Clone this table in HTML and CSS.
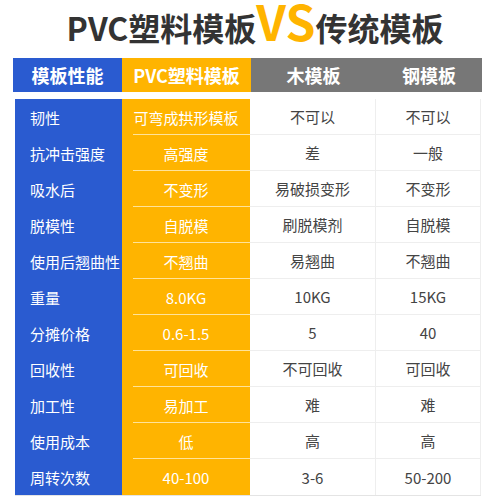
FILE: index.html
```html
<!DOCTYPE html>
<html lang="zh">
<head>
    <meta charset="UTF-8">
    <title>PVC塑料模板VS传统模板</title>
    <link rel="stylesheet" href="styles.css">
</head>
<body>

<h1 class="title">PVC塑料模板<span class="vs">VS</span>传统模板</h1>

<div class="head">
    <div class="h-blue">模板性能</div>
    <div class="h-yellow">PVC塑料模板</div>
    <div class="h-gray">木模板</div>
    <div class="h-gray">钢模板</div>
</div>

<div class="table">
    <div class="row"><div class="label">韧性</div><div class="pvc">可弯成拱形模板</div><div class="val">不可以</div><div class="val">不可以</div></div>
    <div class="row"><div class="label">抗冲击强度</div><div class="pvc">高强度</div><div class="val">差</div><div class="val">一般</div></div>
    <div class="row"><div class="label">吸水后</div><div class="pvc">不变形</div><div class="val">易破损变形</div><div class="val">不变形</div></div>
    <div class="row"><div class="label">脱模性</div><div class="pvc">自脱模</div><div class="val">刷脱模剂</div><div class="val">自脱模</div></div>
    <div class="row"><div class="label">使用后翘曲性</div><div class="pvc">不翘曲</div><div class="val">易翘曲</div><div class="val">不翘曲</div></div>
    <div class="row"><div class="label">重量</div><div class="pvc">8.0KG</div><div class="val">10KG</div><div class="val">15KG</div></div>
    <div class="row"><div class="label">分摊价格</div><div class="pvc">0.6-1.5</div><div class="val">5</div><div class="val">40</div></div>
    <div class="row"><div class="label">回收性</div><div class="pvc">可回收</div><div class="val">不可回收</div><div class="val">可回收</div></div>
    <div class="row"><div class="label">加工性</div><div class="pvc">易加工</div><div class="val">难</div><div class="val">难</div></div>
    <div class="row"><div class="label">使用成本</div><div class="pvc">低</div><div class="val">高</div><div class="val">高</div></div>
    <div class="row"><div class="label">周转次数</div><div class="pvc">40-100</div><div class="val">3-6</div><div class="val">50-200</div></div>
</div>

</body>
</html>
```

FILE: styles.css
```css
* {
    margin: 0;
    padding: 0;
    box-sizing: border-box;
    font-family: "Noto Sans CJK SC", "Noto Sans", sans-serif;
}

body {
    background: #fff;
    width: 500px;
}

.title {
    height: 58px;
    padding-left: 10px;
    line-height: 40px;
    text-align: center;
    font-size: 32px;
    font-weight: bold;
    color: #333;
    white-space: nowrap;
}

.vs {
    display: inline-block;
    margin-top: -4px;
    font-size: 48px;
    line-height: 48px;
    color: #ffb400;
}

.head {
    display: grid;
    grid-template-columns: 109px 129px 125px 106px;
    height: 34px;
    margin: 0 18px 0 13px;
}

.head div {
    display: flex;
    justify-content: center;
    align-items: center;
    color: #fff;
    font-size: 18px;
    font-weight: bold;
}

.h-blue {
    background: #2a5bd0;
}

.h-yellow {
    background: #ffb400;
}

.h-gray {
    background: #777;
}

.table {
    margin: 7px 19px 0 15px;
    border-bottom: 1px solid #e4e4e4;
}

.row {
    display: grid;
    grid-template-columns: 107px 128px 126px 105px;
    height: 36px;
}

.row div {
    display: flex;
    align-items: center;
    justify-content: center;
    font-size: 15px;
    white-space: nowrap;
}

.row .label {
    justify-content: flex-start;
    padding-left: 15px;
    background: #2a5bd0;
    color: #fff;
    font-size: 15px;
}

.row .pvc {
    position: relative;
    background: #ffb400;
    color: #fff;
}

.row .pvc::after {
    content: "";
    position: absolute;
    left: 11px;
    right: 0;
    bottom: 0;
    height: 1px;
    background: #ffe39a;
}

.row:last-child .pvc::after {
    display: none;
}

.row .val {
    color: #444;
    border-bottom: 1px solid #eee;
    border-right: 1px solid #eee;
}

.row:last-child .val {
    border-bottom: none;
}
```
